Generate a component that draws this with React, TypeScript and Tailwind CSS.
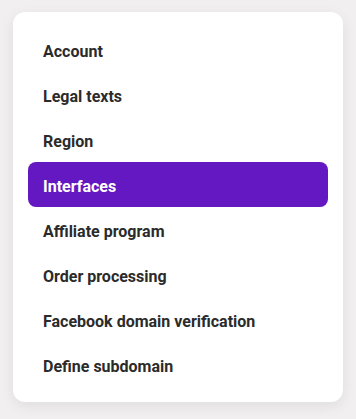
const items = [
  "Account",
  "Legal texts",
  "Region",
  "Interfaces",
  "Affiliate program",
  "Order processing",
  "Facebook domain verification",
  "Define subdomain",
];

export default function App() {
  const active = "Interfaces";
  return (
    <div className="w-[356px] h-[419px] bg-[#f1eff0] pt-3 pl-[13px] font-['Roboto',sans-serif]">
      <nav className="w-[330px] bg-white rounded-xl p-[15px] shadow-[0_4px_14px_rgba(0,0,0,0.08)]">
        <ul className="flex flex-col">
          {items.map((label) => (
            <li
              key={label}
              className={
                label === active
                  ? "h-[45px] flex items-center px-[15px] pt-1 rounded-lg bg-[#6418c1] text-white text-[16px] font-bold"
                  : "h-[45px] flex items-center px-[15px] pt-1 text-[#2b2b2b] text-[16px] font-bold"
              }
            >
              {label}
            </li>
          ))}
        </ul>
      </nav>
    </div>
  );
}
